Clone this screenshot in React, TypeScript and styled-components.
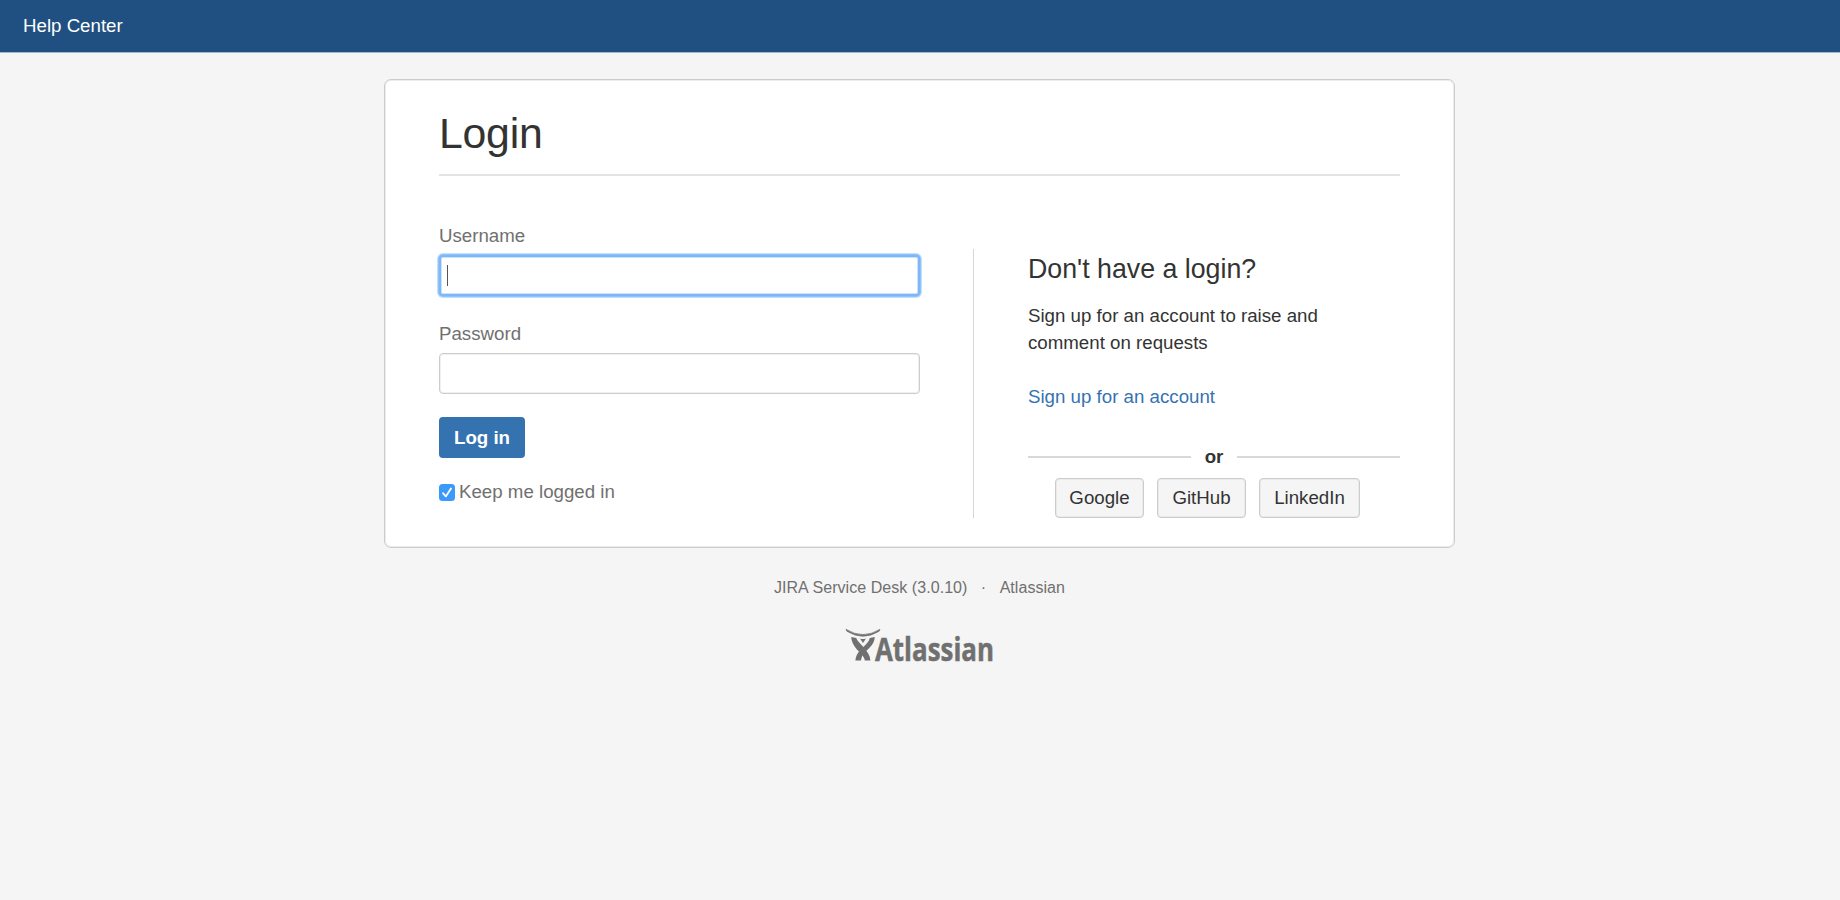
import React from "react";
import styled, { createGlobalStyle } from "styled-components";

const GlobalStyle = createGlobalStyle`
  *, *::before, *::after { box-sizing: border-box; }
  html, body { margin: 0; background: #f5f5f5; }
  body {
    font-family: "Liberation Sans", Arial, sans-serif;
    font-size: 18.7px;
    line-height: 26.7px;
    color: #333;
  }
  h1, h2, p { margin: 0; font-weight: 400; }
`;

const Page = styled.div`
  min-height: 900px;
  display: flex;
  flex-direction: column;
  align-items: center;
`;

const Header = styled.header`
  align-self: stretch;
  height: 53px;
  padding: 13px 23px;
  background: #205081;
  border-bottom: 1px solid #a3b6cb;
`;

const HeaderLink = styled.a`
  color: #fff;
  text-decoration: none;
`;

const Card = styled.main`
  width: 1071px;
  height: 469px;
  margin: 26px 0 0 -1px;
  padding: 28px 54px 0;
  background: #fff;
  border: 1px solid #ccc;
  border-radius: 7px;
  box-shadow: inset 0 0 0 1px #ececec;
`;

const Title = styled.h1`
  height: 68px;
  font-size: 42.8px;
  line-height: 50px;
  letter-spacing: -0.25px;
  border-bottom: 2px solid #e3e3e3;
`;

const Columns = styled.div`
  display: flex;
`;

const Form = styled.form`
  width: 481px;
  padding-top: 47px;
  display: flex;
  flex-direction: column;
  align-items: flex-start;
  color: #707070;
`;

const Label = styled.label`
  height: 32px;
`;

const Field = styled.div<{ $focused?: boolean }>`
  width: 481px;
  height: 41px;
  margin-bottom: 25px;
  padding: 8px 7px;
  background: #fff;
  border: ${(p) => (p.$focused ? "2px solid #7cb8f8" : "1px solid #ccc")};
  border-radius: 4px;
  box-shadow: ${(p) =>
    p.$focused
      ? "0 0 0 1px #8fc3fa, 0 0 0 2px #c3dffc, inset 0 0 0 1px #cbe3fc"
      : "inset 0 0 0 1px #f0f0f0"};
`;

const Caret = styled.span`
  display: block;
  width: 1px;
  height: 21px;
  margin-left: -1px;
  background: #555;
`;

const Submit = styled.button`
  width: 86px;
  height: 41px;
  margin: -2px 0 21px;
  padding: 0;
  border: 0;
  border-radius: 4px;
  background: #3572b0;
  color: #fff;
  font: bold 18.7px/41px "Liberation Sans", Arial, sans-serif;
`;

const Remember = styled.label`
  display: flex;
  align-items: flex-start;
  gap: 4px;
`;

const CheckBox = styled.svg`
  width: 16px;
  height: 17px;
  margin-top: 5px;
`;

const Aside = styled.section`
  width: 428px;
  height: 269px;
  margin: 73px 0 0 53px;
  padding: 6px 0 0 54px;
  border-left: 1px solid #d6d6d6;
`;

const AsideTitle = styled.h2`
  font-size: 26.75px;
  line-height: 28px;
  margin-bottom: 20px;
`;

const SignUp = styled.a`
  display: block;
  margin: 28px 0 33px;
  color: #3572b0;
  text-decoration: none;
`;

const Separator = styled.div`
  display: flex;
  align-items: center;
  gap: 14px;
  font-weight: 700;
  &::before, &::after {
    content: "";
    flex: 1;
    height: 2px;
    background: #d8d8d8;
  }
`;

const Providers = styled.div`
  display: flex;
  gap: 13px;
  margin: 7px 0 0 27px;
`;

const Provider = styled.button<{ $width: number }>`
  width: ${(p) => p.$width}px;
  height: 40px;
  padding: 0;
  background: #f5f5f5;
  border: 1px solid #ccc;
  border-radius: 4px;
  box-shadow: inset 0 0 0 1px #eaeaea;
  color: #333;
  font: 18.7px/38px "Liberation Sans", Arial, sans-serif;
`;

const Footer = styled.footer`
  display: flex;
  flex-direction: column;
  align-items: center;
  padding-top: 26px;
  color: #707070;
  font-size: 16.05px;
`;

const Credits = styled.div`
  display: flex;
  gap: 13.4px;
  margin-right: 1px;
  letter-spacing: 0.04px;
`;

const Logo = styled.svg`
  width: 152px;
  height: 54px;
  margin: 19px 0 0 1px;
`;

const AtlassianLogo = () => (
  <Logo viewBox="0 -8 152 54" fill="#707070" aria-label="Atlassian">
    <path d="M1 1.2 Q18 11.8 35 1.2 L34.2 3.2 Q18 13.3 1.8 3.2 Z" stroke="#707070" strokeWidth="0.6" strokeLinejoin="round" />
    <path d="M6.2 9 L11.2 10 C12.6 15 25.4 23 25.4 32.6 H19.8 C19.6 25.8 7 21 6.2 9 Z" />
    <path d="M29.8 9 L24.8 10 C24 13.8 20.8 16.6 18 19.2 L21 23 C25.2 19.4 29.2 16 29.8 9 Z" />
    <path d="M14.4 23 C12 26 10.6 28.8 10.4 32.6 H16 C16.2 30.2 16.9 28.6 18 26.8 Z" />
    <path d="M15 10.6 Q18 11.6 21 10.6 L18 15 Z" />
    <text
      x="30"
      y="32.6"
      fontFamily='"Open Sans", "Noto Sans", sans-serif'
      fontWeight="700"
      fontSize="32.4"
      textLength="119"
      lengthAdjust="spacingAndGlyphs"
      stroke="#707070"
      strokeWidth="0.5"
    >
      Atlassian
    </text>
  </Logo>
);

export default function App() {
  return (
    <>
      <GlobalStyle />
      <Page>
        <Header>
          <HeaderLink>Help Center</HeaderLink>
        </Header>
        <Card>
          <Title>Login</Title>
          <Columns>
            <Form>
              <Label>Username</Label>
              <Field $focused>
                <Caret />
              </Field>
              <Label>Password</Label>
              <Field />
              <Submit type="button">Log in</Submit>
              <Remember>
                <CheckBox viewBox="0 0 16 17">
                  <rect width="16" height="17" rx="3.5" fill="#3b99fc" />
                  <path d="M4 9.2 L6.8 12.4 L12 4.4" fill="none" stroke="#fff" strokeWidth="1.8" strokeLinecap="round" strokeLinejoin="round" />
                </CheckBox>
                Keep me logged in
              </Remember>
            </Form>
            <Aside>
              <AsideTitle>Don't have a login?</AsideTitle>
              <p>
                Sign up for an account to raise and
                <br />
                comment on requests
              </p>
              <SignUp>Sign up for an account</SignUp>
              <Separator>or</Separator>
              <Providers>
                <Provider $width={89}>Google</Provider>
                <Provider $width={89}>GitHub</Provider>
                <Provider $width={101}>LinkedIn</Provider>
              </Providers>
            </Aside>
          </Columns>
        </Card>
        <Footer>
          <Credits>
            <span>JIRA Service Desk (3.0.10)</span>
            <span>·</span>
            <span>Atlassian</span>
          </Credits>
          <AtlassianLogo />
        </Footer>
      </Page>
    </>
  );
}
